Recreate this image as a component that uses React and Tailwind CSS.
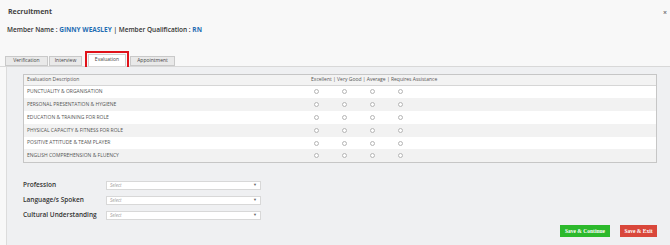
const rows = [
  'PUNCTUALITY & ORGANISATION',
  'PERSONAL PRESENTATION & HYGIENE',
  'EDUCATION & TRAINING FOR ROLE',
  'PHYSICAL CAPACITY & FITNESS FOR ROLE',
  'POSITIVE ATTITUDE & TEAM PLAYER',
  'ENGLISH COMPREHENSION & FLUENCY',
]

const tabs = ['Verification', 'Interview', 'Evaluation', 'Appointment']

const fields = ['Profession', "Language/s Spoken", 'Cultural Understanding']

function Radio() {
  return (
    <div className="w-[28px] flex justify-center">
      <span className="block w-[5px] h-[5px] rounded-full border border-[#b5b5b5] bg-white" />
    </div>
  )
}

export default function App() {
  return (
    <div
      className="w-[670px] h-[245px] bg-[#f8f8f8] overflow-hidden flex flex-col text-[#333]"
      style={{ fontFamily: '"Open Sans", "Liberation Sans", sans-serif' }}
    >
      {/* header */}
      <div className="flex items-center justify-between pl-[8px] pr-[3px] pt-[8px] h-[17px]">
        <span className="text-[7px] font-bold text-[#444]">Recruitment</span>
        <span className="text-[7px] font-bold text-[#777] leading-none">×</span>
      </div>

      <div className="pl-[7px] mt-[10px] text-[6.5px] font-semibold text-[#333] leading-none">
        Member Name : <span className="font-bold text-[#1f6db3]">GINNY WEASLEY</span> | Member Qualification :{' '}
        <span className="font-bold text-[#1f6db3]">RN</span>
      </div>

      {/* tabs */}
      <div className="mt-[14px] flex items-end pl-[5px] h-[19px] border-b border-[#d8d8d8]">
        {tabs.map((t) =>
          t === 'Evaluation' ? (
            <div key={t} className="ml-[2px] mr-[1px] border-2 border-[#e0121a] p-[1px] mb-[-3px]">
              <div className="w-[38px] h-[12px] bg-white border border-b-0 border-[#cfcfcf] flex items-center justify-center text-[5px] text-[#444]">
                {t}
              </div>
            </div>
          ) : (
            <div
              key={t}
              className={`h-[10px] mr-[1px] bg-[#e9e9e9] border border-[#c9c9c9] flex items-center justify-center text-[5px] text-[#444] ${
                t === 'Verification' ? 'w-[43px]' : t === 'Interview' ? 'w-[33px]' : 'w-[45px]'
              }`}
            >
              {t}
            </div>
          )
        )}
      </div>

      {/* content panel */}
      <div className="flex-1 ml-[6px] bg-[#eff0f2] border-l border-[#dcdcdc] flex flex-col pl-[16px] pr-[13px] pt-[7px]">
        <div className="border border-[#c6c6c6] bg-white">
          <div className="h-[11px] flex items-center bg-[#f3f3f3] border-b border-[#d6d6d6] text-[5px] text-[#555]">
            <div className="w-[287px] pl-[3px]">Evaluation Description</div>
            <div>Excellent | Very Good | Average | Requires Assistance</div>
          </div>
          {rows.map((r, i) => (
            <div
              key={r}
              className={`h-[12.8px] flex items-center text-[5px] text-[#555] ${i % 2 ? 'bg-[#f2f2f2]' : 'bg-white'}`}
            >
              <div className="w-[278px] pl-[3px]">{r}</div>
              <Radio />
              <Radio />
              <Radio />
              <Radio />
            </div>
          ))}
        </div>

        <div className="mt-[17px] flex flex-col gap-[5px]">
          {fields.map((f) => (
            <div key={f} className="flex items-center h-[10px]">
              <div className="w-[83px] text-[6.5px] font-semibold text-[#333]">{f}</div>
              <div className="w-[155px] h-[9px] bg-white border border-[#d8d8d8] flex items-center justify-between px-[3px]">
                <span className="text-[4.5px] italic text-[#999]">Select</span>
                <span className="text-[4px] text-[#666]">▼</span>
              </div>
            </div>
          ))}
        </div>

        <div className="mt-auto mb-[8px] flex justify-end gap-[10px]">
          <button
            type="button"
            className="w-[50px] h-[12px] bg-[#2cb92c] text-white text-[5.5px] font-bold flex items-center justify-center"
            style={{ fontFamily: '"Liberation Serif", serif' }}
          >
            Save &amp; Continue
          </button>
          <button
            type="button"
            className="w-[37px] h-[12px] bg-[#d9473b] text-white text-[5.5px] font-bold flex items-center justify-center"
            style={{ fontFamily: '"Liberation Serif", serif' }}
          >
            Save &amp; Exit
          </button>
        </div>
      </div>
    </div>
  )
}
